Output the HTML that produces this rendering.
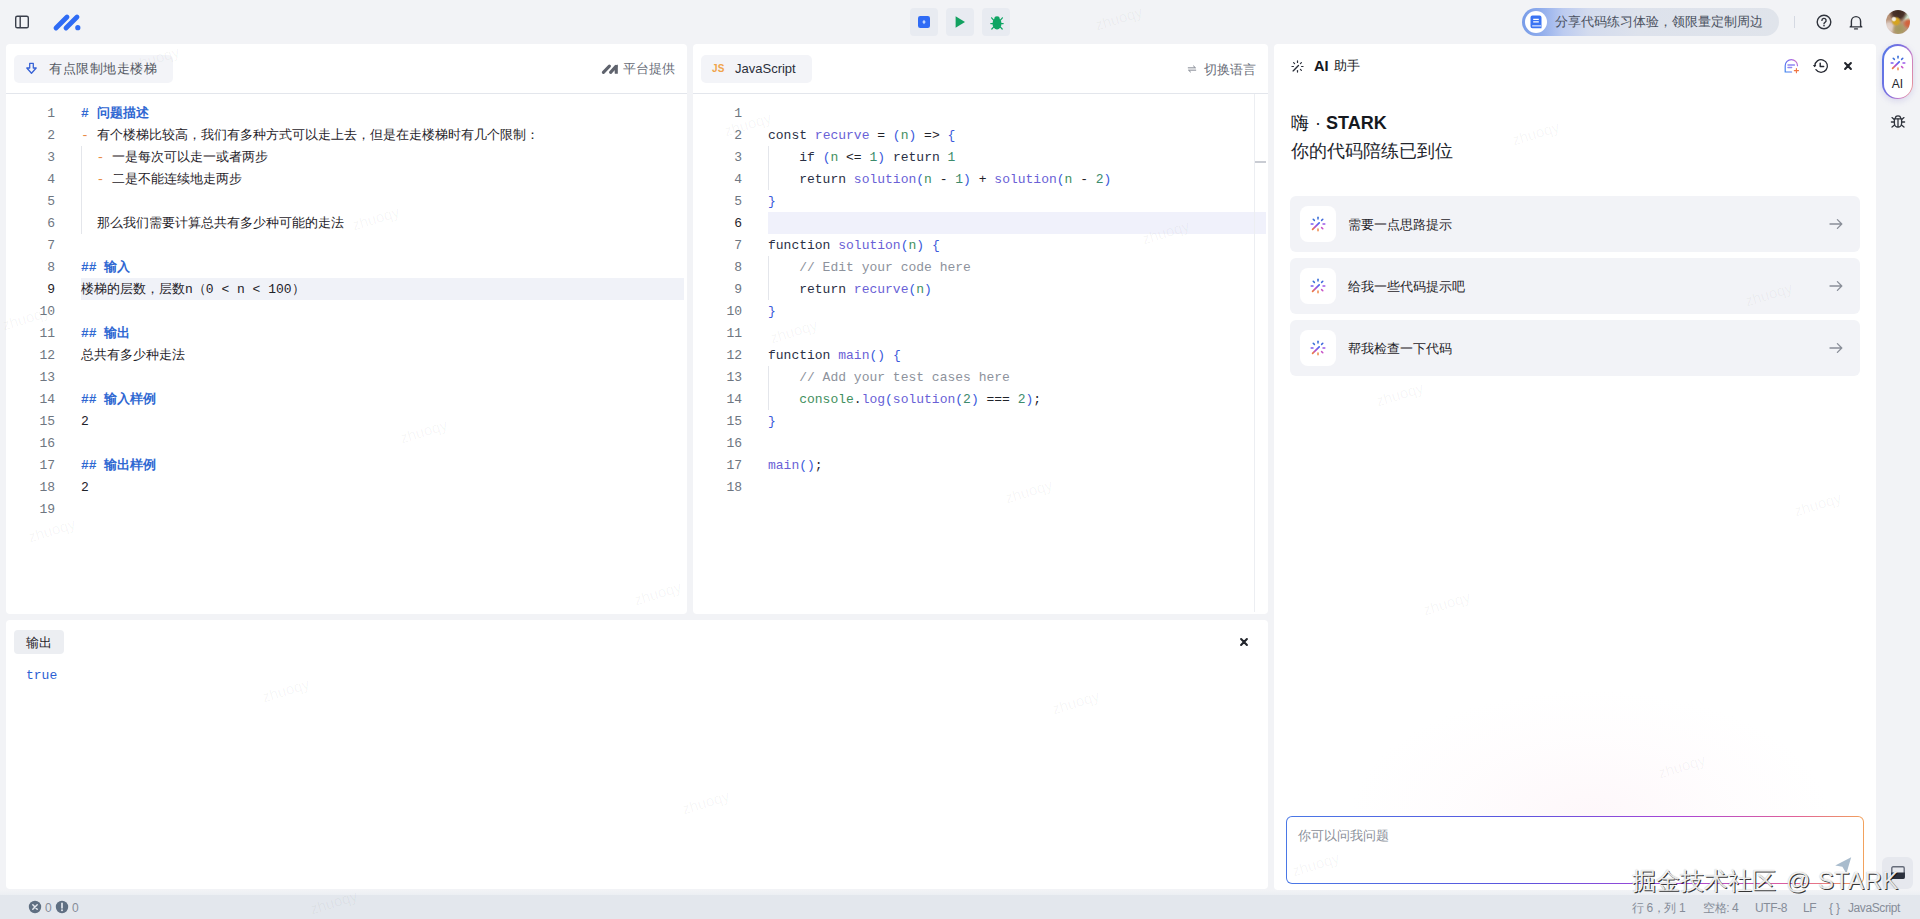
<!DOCTYPE html>
<html lang="zh">
<head>
<meta charset="utf-8">
<title>MarsCode</title>
<style>
*{box-sizing:border-box;margin:0;padding:0}
html,body{width:1920px;height:919px;overflow:hidden}
body{position:relative;background:#f2f3f6;font-family:"Liberation Sans",sans-serif;color:#1f2329;font-size:13px}
.abs{position:absolute}
.panel{position:absolute;background:#fff;border-radius:4px}
.hdrline{position:absolute;left:0;right:0;top:49px;height:1px;background:#e3e6ec}
.chip{position:absolute;background:#f3f4f8;border-radius:5px}
.tbtn{position:absolute;top:8px;width:28px;height:28px;border-radius:4px;background:#e8ebf1}
.ed{position:absolute;font-family:"Liberation Mono",monospace;font-size:13px;line-height:22px;white-space:pre;color:#1f2329}
.ln{position:absolute;width:40px;text-align:right;font-family:"Liberation Mono",monospace;font-size:13px;line-height:22px;color:#6e7681;white-space:pre}
.ln b{font-weight:normal;color:#1f2329}
.hl{position:absolute;height:22px;background:#f0f2f8}
.guide{position:absolute;width:1px;background:#e4e6eb}
.k{color:#2a2f45}.f{color:#6a5fd6}.p{color:#3b5bdb}.v{color:#3f8f5e}.n{color:#3d8b6c}.c{color:#8d929c}.h{color:#2f68d2;font-weight:bold}.o{color:#e98a45}
.card{position:absolute;left:1290px;width:570px;height:56px;background:#f2f3f7;border-radius:6px}
.card .ib{position:absolute;left:10px;top:10px;width:36px;height:36px;background:#fff;border-radius:8px}
.card .t{position:absolute;left:58px;top:1px;line-height:56px;font-size:13px;color:#1f2329}
.card svg.ar{position:absolute;left:539px;top:22px}
.sb{position:absolute;top:896px;height:25px;line-height:25px;font-size:12px;color:#868d99;white-space:pre;letter-spacing:-.4px}
.wm{position:absolute;font-size:15px;color:rgba(20,25,40,.045);transform:rotate(-17deg);transform-origin:left top;letter-spacing:0}
</style>
</head>
<body>

<!-- ===== top bar ===== -->
<svg class="abs" style="left:14px;top:14px" width="16" height="16" viewBox="0 0 16 16" fill="none" stroke="#3a3f4b" stroke-width="1.4"><rect x="1.7" y="2.2" width="12.6" height="11.6" rx="1.6"/><path d="M6.2 2.2v11.6"/></svg>
<svg class="abs" style="left:52px;top:12px" width="30" height="20" viewBox="0 0 30 20"><g stroke="#2f6bf5" stroke-width="4.8" stroke-linecap="round"><path d="M4 16L15 5"/><path d="M14 16L25 5"/></g><circle cx="25.8" cy="15.7" r="2.6" fill="#2f6bf5"/></svg>

<div class="tbtn" style="left:910px"></div>
<div class="tbtn" style="left:946px"></div>
<div class="tbtn" style="left:982px"></div>


<!-- toolbar icons -->
<svg class="abs" style="left:918px;top:16px" width="12" height="12" viewBox="0 0 12 12"><rect width="12" height="12" rx="2.2" fill="#2f6bf5"/><path d="M6 3.700L7.700 6L6 8.300L4.300 6Z" fill="#bcd4ff"/></svg>
<svg class="abs" style="left:955px;top:15px" width="11" height="14" viewBox="0 0 11 14"><path d="M0.6 1.2L10 7L0.6 12.8Z" fill="#12a160"/></svg>
<svg class="abs" style="left:989px;top:14px" width="16" height="17" viewBox="0 0 16 17"><g fill="#0fa564"><ellipse cx="8" cy="9.600" rx="4.500" ry="5.800"/><ellipse cx="8" cy="4.600" rx="2.600" ry="2.400"/></g><g stroke="#0fa564" stroke-width="1.200" stroke-linecap="round" fill="none"><path d="M1.800 9.600H14.200"/><path d="M4.800 6.400L2.600 3.800"/><path d="M11.200 6.400L13.400 3.800"/><path d="M4.800 12.800L2.800 15"/><path d="M11.200 12.800L13.200 15"/></g></svg>

<!-- promo pill -->
<div class="abs" style="left:1522px;top:8px;width:257px;height:28px;border-radius:14px;background:linear-gradient(90deg,#789ce8 0%,#8facec 7%,#bccbf0 16%,#d3dbee 26%,#dde2ec 45%,#e0e4eb 100%)"></div>
<div class="abs" style="left:1525px;top:11px;width:22px;height:22px;border-radius:11px;background:#fff"></div>
<svg class="abs" style="left:1530px;top:15px" width="12" height="14" viewBox="0 0 12 14"><path d="M2.4 0.5H9.6A1.9 1.9 0 0 1 11.5 2.4V13.2H2.4A1.9 1.9 0 0 1 0.5 11.3V2.4A1.9 1.9 0 0 1 2.4 0.5Z" fill="#3b74f3"/><path d="M3.2 4.3H8.8M3.2 6.9H8.8" stroke="#fff" stroke-width="1.3"/><path d="M2.2 10.9H11" stroke="#fff" stroke-width="1"/></svg>
<div class="abs" style="left:1555px;top:8px;height:28px;line-height:28px;font-size:13px;color:#4a5160;white-space:nowrap">分享代码练习体验，领限量定制周边</div>
<div class="abs" style="left:1794px;top:16px;width:1px;height:12px;background:#d5d9e2"></div>
<svg class="abs" style="left:1815px;top:13px" width="18" height="18" viewBox="0 0 18 18" fill="none" stroke="#30343d" stroke-width="1.4"><circle cx="9" cy="9" r="6.8"/><path d="M6.9 7.4a2.1 2.1 0 1 1 3.1 1.9c-.7.4-1 .8-1 1.5" stroke-linecap="round"/><circle cx="9" cy="12.7" r=".5" fill="#30343d" stroke-width=".7"/></svg>
<svg class="abs" style="left:1847px;top:13px" width="18" height="18" viewBox="0 0 18 18" fill="none" stroke="#30343d" stroke-width="1.4" stroke-linejoin="round"><path d="M4.4 12.8V8.2a4.6 4.6 0 0 1 9.2 0v4.6l1.2 1.1H3.2Z"/><path d="M7.6 15.9h2.8" stroke-linecap="round"/></svg>
<div class="abs" style="left:1886px;top:10px;width:24px;height:24px;border-radius:12px;background:radial-gradient(circle at 33% 38%,#f4efe2 0,#f4efe2 6%,rgba(244,239,226,0) 13%),radial-gradient(circle at 42% 47%,#d8a61c 0,#d2a326 15%,rgba(210,163,38,0) 27%),radial-gradient(circle at 52% 10%,#3f2a20 0,#4b332a 22%,rgba(75,51,42,0) 40%),radial-gradient(circle at 93% 56%,#d2603a 0,#cf6a45 10%,rgba(207,106,69,0) 22%),radial-gradient(circle at 92% 30%,#d4e6cf 0,#cfe0c8 10%,rgba(207,224,200,0) 24%),radial-gradient(circle at 55% 80%,#a3975f 0,#aa9a66 16%,rgba(170,154,102,0) 32%),radial-gradient(circle at 12% 72%,#e6d6cf 0,#dccbc3 14%,rgba(220,203,195,0) 30%),#b99378"></div>

<!-- ===== panels ===== -->
<div class="panel" id="p1" style="left:6px;top:44px;width:681px;height:570px">
<div class="hdrline"></div>
<div class="chip" style="left:8px;top:11px;width:159px;height:28px"></div>
<svg class="abs" style="left:19px;top:18px" width="13" height="13" viewBox="0 0 13 13" fill="none" stroke="#3863d6" stroke-width="1.300" stroke-linejoin="round"><path d="M4.700 1.400h3.600v4.600h2.900L6.500 11.300 1.800 6h2.900Z"/></svg>
<div class="abs" style="left:43px;top:11px;height:27px;line-height:27px;font-size:13px;letter-spacing:.55px;color:#555a64;white-space:nowrap">有点限制地走楼梯</div>
<svg class="abs" style="left:595px;top:19px" width="18" height="12" viewBox="0 0 18 12"><g stroke="#5f636d" stroke-width="3.100" stroke-linecap="round"><path d="M2.400 9.400L8.400 3.200"/><path d="M9.600 9.400L15 3.400"/></g><path d="M13.400 3.200L16.800 1.400V10.800H13.800Z" fill="#5f636d"/></svg>
<div class="abs" style="left:617px;top:11px;height:27px;line-height:27px;font-size:13px;color:#676c77;white-space:nowrap">平台提供</div>
<div class="hl" style="left:75px;top:234px;width:603px"></div>
<div class="guide" style="left:75px;top:102px;height:88px"></div>
<div class="ln" style="left:9px;top:59px">1
2
3
4
5
6
7
8
<b>9</b>
10
11
12
13
14
15
16
17
18
19</div>
<div class="ed" style="left:75px;top:59px"><span class="h"># 问题描述</span>
<span class="o">-</span> 有个楼梯比较高，我们有多种方式可以走上去，但是在走楼梯时有几个限制：
  <span class="o">-</span> 一是每次可以走一或者两步
  <span class="o">-</span> 二是不能连续地走两步

  那么我们需要计算总共有多少种可能的走法

<span class="h">## 输入</span>
楼梯的层数，层数n（0 &lt; n &lt; 100）

<span class="h">## 输出</span>
总共有多少种走法

<span class="h">## 输入样例</span>
2

<span class="h">## 输出样例</span>
2
</div>
</div>
<div class="panel" id="p2" style="left:693px;top:44px;width:575px;height:570px">
<div class="hdrline"></div>
<div class="chip" style="left:8px;top:11px;width:111px;height:28px"></div>
<div class="abs" style="left:19px;top:11px;height:28px;line-height:28px;font-size:10px;font-weight:bold;color:#f0a44b;letter-spacing:.2px">JS</div>
<div class="abs" style="left:42px;top:11px;height:27px;line-height:27px;font-size:13px;color:#2b2f3a;white-space:nowrap">JavaScript</div>
<svg class="abs" style="left:494px;top:20px" width="10" height="10" viewBox="0 0 12 12" fill="none" stroke="#7a7f8a" stroke-width="1.1" stroke-linecap="round" stroke-linejoin="round"><path d="M1.500 4.600H10.200L7.800 2.400"/><path d="M10.500 7.400H1.800L4.200 9.600"/></svg>
<div class="abs" style="left:511px;top:12px;height:28px;line-height:28px;font-size:13px;color:#676c77;white-space:nowrap">切换语言</div>
<div class="hl" style="left:75px;top:168px;width:498px;background:#f0f1fb"></div>
<div class="guide" style="left:75px;top:102px;height:44px"></div>
<div class="guide" style="left:75px;top:212px;height:44px"></div>
<div class="guide" style="left:75px;top:322px;height:44px"></div>
<div class="abs" style="left:561px;top:50px;width:1px;height:518px;background:#eceef2"></div>
<div class="abs" style="left:562px;top:117px;width:11px;height:2px;background:#c9ccd3"></div>
<div class="ln" style="left:9px;top:59px">1
2
3
4
5
<b>6</b>
7
8
9
10
11
12
13
14
15
16
17
18</div>
<div class="ed" style="left:75px;top:59px">
<span class="k">const</span> <span class="f">recurve</span> = <span class="p">(</span><span class="v">n</span><span class="p">)</span> =&gt; <span class="p">{</span>
    <span class="k">if</span> <span class="p">(</span><span class="v">n</span> &lt;= <span class="n">1</span><span class="p">)</span> <span class="k">return</span> <span class="n">1</span>
    <span class="k">return</span> <span class="f">solution</span><span class="p">(</span><span class="v">n</span> - <span class="n">1</span><span class="p">)</span> + <span class="f">solution</span><span class="p">(</span><span class="v">n</span> - <span class="n">2</span><span class="p">)</span>
<span class="p">}</span>

<span class="k">function</span> <span class="f">solution</span><span class="p">(</span><span class="v">n</span><span class="p">)</span> <span class="p">{</span>
    <span class="c">// Edit your code here</span>
    <span class="k">return</span> <span class="f">recurve</span><span class="p">(</span><span class="v">n</span><span class="p">)</span>
<span class="p">}</span>

<span class="k">function</span> <span class="f">main</span><span class="p">()</span> <span class="p">{</span>
    <span class="c">// Add your test cases here</span>
    <span class="v">console</span>.<span class="f">log</span><span class="p">(</span><span class="f">solution</span><span class="p">(</span><span class="n">2</span><span class="p">)</span> === <span class="n">2</span><span class="p">)</span>;
<span class="p">}</span>

<span class="f">main</span><span class="p">()</span>;
</div>
</div>
<div class="panel" id="p3" style="left:6px;top:620px;width:1262px;height:269px">
<div class="abs" style="left:8px;top:10px;width:50px;height:24px;border-radius:4px;background:#eceef2"></div>
<div class="abs" style="left:8px;top:11px;width:50px;height:24px;line-height:24px;text-align:center;font-size:13px;color:#1f2329">输出</div>
<svg class="abs" style="left:1233px;top:17px" width="10" height="10" viewBox="0 0 10 10" stroke="#23262d" stroke-width="2.100" stroke-linecap="round"><path d="M2.100 2.100L7.900 7.900M7.900 2.100L2.100 7.900"/></svg>
<div class="ed" style="left:20px;top:45px;color:#2c5fd3">true</div>
</div>
<div class="panel" id="p4" style="left:1274px;top:44px;width:602px;height:846px">
<svg width="0" height="0" style="position:absolute"><defs><linearGradient id="wg" x1="1" y1="0" x2="0" y2="1"><stop offset="0" stop-color="#3f6df0"/><stop offset=".55" stop-color="#b14fd8"/><stop offset="1" stop-color="#f07a3a"/></linearGradient><linearGradient id="cg" x1="0" y1="1" x2="1" y2="0"><stop offset="0" stop-color="#3f86ee"/><stop offset=".5" stop-color="#6a6cf0"/><stop offset=".8" stop-color="#b06ae0"/><stop offset="1" stop-color="#f08a8a"/></linearGradient></defs></svg>
<svg class="abs" style="left:17px;top:15.500px" width="13" height="13" viewBox="0 0 16 16" fill="none" stroke="#2b2f3a" stroke-linecap="round" stroke-width="1.500"><path d="M2.600 13.400L9.200 6.800" stroke-width="1.700"/><path d="M8 1.200V3"/><path d="M3.200 3.200L4.400 4.400"/><path d="M1.200 8H3"/><path d="M12.800 3.200L11.600 4.400"/><path d="M13 8H14.800"/><path d="M11.600 11.600L12.800 12.800"/><path d="M8 13V14.800"/></svg>
<div class="abs" style="left:40px;top:11px;height:22px;line-height:22px;font-size:14.500px;font-weight:bold;color:#15181e;white-space:nowrap">AI</div><div class="abs" style="left:60px;top:11px;height:22px;line-height:22px;font-size:13px;color:#15181e;white-space:nowrap">助手</div>
<svg class="abs" style="left:509px;top:13px" width="17" height="17" viewBox="0 0 17 17" fill="none" stroke-linecap="round" stroke-width="1.200"><path d="M8.600 15H2.200V8.750A6.150 6.150 0 0 1 14.500 8.750" stroke="url(#cg)"/><path d="M5 7.900H11.400M5 10.500H8.600" stroke="#8f86f2" stroke-width="1.500"/><path d="M13.400 11.500V15.700M11.300 13.600H15.500" stroke="#ef7440" stroke-width="1.100"/></svg>
<svg class="abs" style="left:537px;top:13px" width="18" height="18" viewBox="0 0 18 18" fill="none" stroke="#262932" stroke-linecap="round" stroke-linejoin="round" stroke-width="1.300"><path d="M3.800 9A6.300 6.300 0 1 1 4.940 12.610"/><path d="M9.200 6.100V9.450H12.700" stroke-width="1.400"/><path d="M1.900 7.900H5.300L3.600 10.200Z" fill="#262932" stroke="none"/></svg>
<svg class="abs" style="left:569px;top:17px" width="10" height="10" viewBox="0 0 10 10" stroke="#23262d" stroke-width="2.100" stroke-linecap="round"><path d="M2.100 2.100L7.900 7.900M7.900 2.100L2.100 7.900"/></svg>
<div class="abs" style="left:17px;top:66px;height:26px;line-height:26px;font-size:18px;color:#15181e;white-space:nowrap">嗨</div><div class="abs" style="left:40px;top:66px;width:8px;height:26px;line-height:26px;font-size:18px;color:#15181e;text-align:center">·</div><div class="abs" style="left:52px;top:66px;height:26px;line-height:26px;font-size:18px;font-weight:bold;color:#15181e;white-space:nowrap">STARK</div>
<div class="abs" style="left:17px;top:93px;height:28px;line-height:28px;font-size:18px;color:#23262d;white-space:nowrap">你的代码陪练已到位</div>
</div>

<div class="card" style="top:196px"><div class="ib"></div><svg class="abs" style="left:20px;top:20px" width="16" height="16" viewBox="0 0 16 16" fill="none" stroke-linecap="round" stroke-width="1.5"><path d="M2.600 13.400L9.200 6.800" stroke="url(#wg)" stroke-width="1.700"/><path d="M8 1.200V3" stroke="#3a6fd8"/><path d="M3.200 3.200L4.400 4.400" stroke="#3a6fd8"/><path d="M1.200 8H3" stroke="#7b5cf0"/><path d="M12.800 3.200L11.600 4.400" stroke="#3f68dc"/><path d="M13 8H14.800" stroke="#9b59e8"/><path d="M11.600 11.600L12.800 12.800" stroke="#c855c8"/><path d="M8 13V14.800" stroke="#f08a4a"/></svg><div class="t">需要一点思路提示</div><svg class="ar" width="14" height="12" viewBox="0 0 14 12" fill="none" stroke="#8a8f99" stroke-width="1.300" stroke-linecap="round" stroke-linejoin="round"><path d="M1 6H12.600M8.400 1.600L12.800 6L8.400 10.400"/></svg></div>
<div class="card" style="top:258px"><div class="ib"></div><svg class="abs" style="left:20px;top:20px" width="16" height="16" viewBox="0 0 16 16" fill="none" stroke-linecap="round" stroke-width="1.5"><path d="M2.600 13.400L9.200 6.800" stroke="url(#wg)" stroke-width="1.700"/><path d="M8 1.200V3" stroke="#3a6fd8"/><path d="M3.200 3.200L4.400 4.400" stroke="#3a6fd8"/><path d="M1.200 8H3" stroke="#7b5cf0"/><path d="M12.800 3.200L11.600 4.400" stroke="#3f68dc"/><path d="M13 8H14.800" stroke="#9b59e8"/><path d="M11.600 11.600L12.800 12.800" stroke="#c855c8"/><path d="M8 13V14.800" stroke="#f08a4a"/></svg><div class="t">给我一些代码提示吧</div><svg class="ar" width="14" height="12" viewBox="0 0 14 12" fill="none" stroke="#8a8f99" stroke-width="1.300" stroke-linecap="round" stroke-linejoin="round"><path d="M1 6H12.600M8.400 1.600L12.800 6L8.400 10.400"/></svg></div>
<div class="card" style="top:320px"><div class="ib"></div><svg class="abs" style="left:20px;top:20px" width="16" height="16" viewBox="0 0 16 16" fill="none" stroke-linecap="round" stroke-width="1.5"><path d="M2.600 13.400L9.200 6.800" stroke="url(#wg)" stroke-width="1.700"/><path d="M8 1.200V3" stroke="#3a6fd8"/><path d="M3.200 3.200L4.400 4.400" stroke="#3a6fd8"/><path d="M1.200 8H3" stroke="#7b5cf0"/><path d="M12.800 3.200L11.600 4.400" stroke="#3f68dc"/><path d="M13 8H14.800" stroke="#9b59e8"/><path d="M11.600 11.600L12.800 12.800" stroke="#c855c8"/><path d="M8 13V14.800" stroke="#f08a4a"/></svg><div class="t">帮我检查一下代码</div><svg class="ar" width="14" height="12" viewBox="0 0 14 12" fill="none" stroke="#8a8f99" stroke-width="1.300" stroke-linecap="round" stroke-linejoin="round"><path d="M1 6H12.600M8.400 1.600L12.800 6L8.400 10.400"/></svg></div>

<!-- AI input -->
<div class="abs" style="left:1350px;top:690px;width:480px;height:126px;background:radial-gradient(ellipse 50% 100% at 50% 100%,rgba(250,226,236,.26),rgba(250,230,240,.09) 60%,rgba(255,255,255,0) 100%)"></div>

<div class="abs" style="left:1286px;top:816px;width:578px;height:68px;border-radius:6px;background:linear-gradient(90deg,#4a78e6 0%,#5b55de 40%,#a945d6 68%,#e0609a 88%,#f2a25c 100%)"></div>
<div class="abs" style="left:1287px;top:817px;width:576px;height:66px;border-radius:5px;background:#fff"></div>
<div class="abs" style="left:1298px;top:825px;height:22px;line-height:22px;font-size:13px;color:#8a8f99;white-space:nowrap">你可以问我问题</div>
<svg class="abs" style="left:1835px;top:857px" width="17" height="17" viewBox="0 0 17 17"><path d="M16.200 0.200L0.200 8.600L7.400 9.700L11.400 16.400Z" fill="#a9bccd"/></svg>

<!-- right sidebar -->
<div class="abs" style="left:1882px;top:44px;width:31px;height:55px;border-radius:16px;background:linear-gradient(105deg,#4f78e8 0%,#7f6fe0 45%,#c97fc8 72%,#f09a8a 100%);box-shadow:0 2px 6px rgba(120,110,200,.22)"></div>
<div class="abs" style="left:1883.500px;top:45.500px;width:28px;height:52px;border-radius:14px;background:#fff"></div>
<svg class="abs" style="left:1890px;top:55px" width="16" height="16" viewBox="0 0 16 16" fill="none" stroke-linecap="round" stroke-width="1.5"><path d="M2.600 13.400L9.200 6.800" stroke="url(#wg)" stroke-width="1.700"/><path d="M8 1.200V3" stroke="#3a6fd8"/><path d="M3.200 3.200L4.400 4.400" stroke="#3a6fd8"/><path d="M1.200 8H3" stroke="#7b5cf0"/><path d="M12.800 3.200L11.600 4.400" stroke="#3f68dc"/><path d="M13 8H14.800" stroke="#9b59e8"/><path d="M11.600 11.600L12.800 12.800" stroke="#c855c8"/><path d="M8 13V14.800" stroke="#f08a4a"/></svg>
<div class="abs" style="left:1882px;top:76px;width:31px;height:16px;line-height:16px;text-align:center;font-size:12px;color:#23262d">AI</div>
<svg class="abs" style="left:1890px;top:113px" width="16" height="17" viewBox="0 0 16 17" fill="none" stroke="#30343d" stroke-width="1.300" stroke-linecap="round"><path d="M4.400 5.800H11.600V10.400A3.600 3.600 0 0 1 4.400 10.400Z"/><path d="M5.300 5.600A2.700 2.700 0 0 1 10.700 5.600"/><path d="M8 6V13.600"/><path d="M1.400 9H4.200M11.800 9H14.600M2 4.600L4.300 6.600M14 4.600L11.700 6.600M2 14L4.600 11.900M14 14L11.400 11.900"/></svg>
<div class="abs" style="left:1882px;top:857px;width:31px;height:32px;border-radius:6px;background:#e6e8ee"></div>
<svg class="abs" style="left:1891px;top:866px" width="14" height="13" viewBox="0 0 14 13"><rect x=".8" y=".8" width="12.400" height="11.400" rx="1.300" fill="none" stroke="#666c7a" stroke-width="1.400"/><path d="M.1 6.600H13.900V11A1.900 1.900 0 0 1 12 12.900H2A1.900 1.900 0 0 1 .1 11Z" fill="#2b303d"/></svg>

<!-- ===== status bar ===== -->
<div class="abs" style="left:0;top:890px;width:1920px;height:5px;background:linear-gradient(180deg,#f2f3f6,#eceff3)"></div>
<div class="abs" style="left:0;top:895px;width:1920px;height:24px;background:#e3e7ed"></div>


<svg class="abs" style="left:28px;top:900px" width="14" height="14" viewBox="0 0 14 14"><circle cx="7" cy="7" r="6.200" fill="#5f6f82"/><path d="M4.800 4.800L9.200 9.200M9.200 4.800L4.800 9.200" stroke="#e4e8ef" stroke-width="1.500" stroke-linecap="round"/></svg>
<div class="sb" style="left:45px">0</div>
<svg class="abs" style="left:55px;top:900px" width="14" height="14" viewBox="0 0 14 14"><circle cx="7" cy="7" r="6.200" fill="#5f6f82"/><path d="M7 3.400V7.800" stroke="#e4e8ef" stroke-width="1.700" stroke-linecap="round"/><circle cx="7" cy="10.300" r="1" fill="#e4e8ef"/></svg>
<div class="sb" style="left:72px">0</div>
<div class="sb" style="left:1632px">行 6，列 1</div>
<div class="sb" style="left:1703px">空格: 4</div>
<div class="sb" style="left:1755px">UTF-8</div>
<div class="sb" style="left:1803px">LF</div>
<div class="sb" style="left:1829px;letter-spacing:3px">{}</div>
<div class="sb" style="left:1848px">JavaScript</div>

<!-- faint watermarks -->
<div class="wm" style="left:1093px;top:17px">zhuoqy</div><div class="wm" style="left:722px;top:123px">zhuoqy</div><div class="wm" style="left:350px;top:217px">zhuoqy</div><div class="wm" style="left:1140px;top:231px">zhuoqy</div><div class="wm" style="left:1510px;top:132px">zhuoqy</div><div class="wm" style="left:1743px;top:293px">zhuoqy</div><div class="wm" style="left:398px;top:430px">zhuoqy</div><div class="wm" style="left:768px;top:330px">zhuoqy</div><div class="wm" style="left:1374px;top:393px">zhuoqy</div><div class="wm" style="left:1003px;top:490px">zhuoqy</div><div class="wm" style="left:1792px;top:503px">zhuoqy</div><div class="wm" style="left:632px;top:592px">zhuoqy</div><div class="wm" style="left:26px;top:529px">zhuoqy</div><div class="wm" style="left:1421px;top:602px">zhuoqy</div><div class="wm" style="left:260px;top:689px">zhuoqy</div><div class="wm" style="left:1050px;top:701px">zhuoqy</div><div class="wm" style="left:680px;top:801px">zhuoqy</div><div class="wm" style="left:1656px;top:765px">zhuoqy</div><div class="wm" style="left:308px;top:901px">zhuoqy</div><div class="wm" style="left:1290px;top:863px">zhuoqy</div><div class="wm" style="left:0px;top:317px">zhuoqy</div><div class="wm" style="left:130px;top:57px">zhuoqy</div>
<!-- big watermark -->
<div class="abs" style="left:1632px;top:866px;height:30px;line-height:30px;font-size:24px;color:rgba(255,255,255,.88);white-space:nowrap;text-shadow:1px 1px .6px rgba(20,20,20,.85),0 0 1px rgba(70,70,70,.45)">掘金技术社区</div><div class="abs" style="left:1786px;top:866px;height:30px;line-height:30px;font-size:24px;color:rgba(255,255,255,.88);white-space:nowrap;text-shadow:1px 1px .6px rgba(20,20,20,.85),0 0 1px rgba(70,70,70,.45);letter-spacing:.5px">@ STARK</div>

</body>
</html>
